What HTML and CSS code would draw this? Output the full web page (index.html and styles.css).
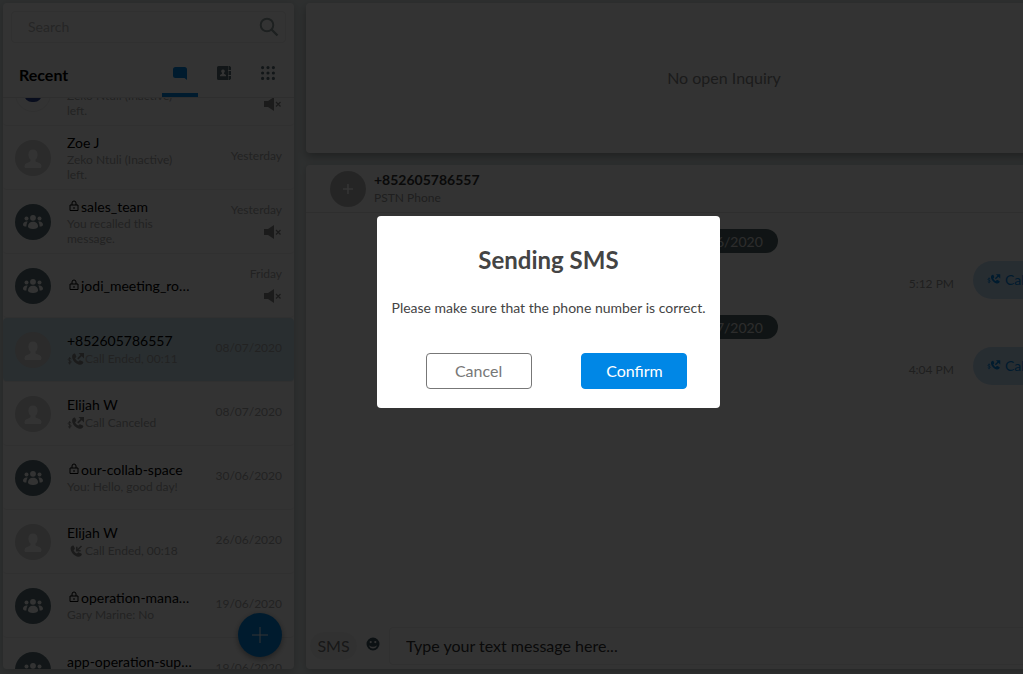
FILE: index.html
```html
<!DOCTYPE html>
<html lang="en">
<head>
    <meta charset="UTF-8">
    <meta name="viewport" content="width=device-width, initial-scale=1.0">
    <title>Messages</title>
    <link rel="stylesheet" href="styles.css">
</head>
<body>

<svg class="sprite" aria-hidden="true">
    <symbol id="i-user" viewBox="0 0 36 36">
        <path d="M18 9.500c-2.700 0-4.600 2-4.600 4.900 0 2 .8 4 2.100 5.200v1.200c0 .7-.4 1-1.200 1.300-2.400.8-4.800 1.700-4.800 4.100 0 1.100.6 1.800 1.500 1.800h14c.9 0 1.500-.7 1.500-1.800 0-2.400-2.400-3.300-4.800-4.100-.8-.3-1.200-.6-1.200-1.300v-1.200c1.300-1.200 2.100-3.200 2.100-5.200 0-2.900-1.900-4.900-4.600-4.900z"/>
    </symbol>
    <symbol id="i-group" viewBox="0 0 36 36">
        <circle cx="11.500" cy="14.500" r="2"/>
        <circle cx="24.500" cy="14.500" r="2"/>
        <circle cx="18" cy="13.800" r="2.900"/>
        <path d="M18 17.800c-3 0-5 2-5 4.500 0 1.800 2 2.700 5 2.700s5-.9 5-2.700c0-2.500-2-4.500-5-4.500z"/>
        <path d="M12.800 17.600c-2.800-.6-4.800 1-4.800 3.200 0 1.200 1.300 1.900 3.400 1.800.1-2.200.4-3.600 1.400-5zM23.200 17.600c2.800-.6 4.800 1 4.800 3.200 0 1.200-1.300 1.900-3.400 1.800-.1-2.200-.4-3.600-1.400-5z"/>
    </symbol>
    <symbol id="i-lock" viewBox="0 0 12 12">
        <path d="M2 5h8v5.500H2zM4 5V3a2 2 0 0 1 4 0v2M6 7v2" fill="none" stroke="currentColor"/>
    </symbol>
    <symbol id="i-mute" viewBox="0 0 18 14">
        <path d="M0 4h4l6-4v14l-6-4H0z"/>
        <path d="M12 5l4.500 4.500M16.500 5L12 9.500" fill="none" stroke="currentColor" stroke-width="1.300"/>
    </symbol>
    <symbol id="i-call-out" viewBox="0 0 18 14">
        <path d="M4.300 7C3.800 6.200 1.200 6 1.200 7.500s3 .9 3 2.400-2.600 1.500-3.200.6M2.700 5v7.500" fill="none" stroke="currentColor" stroke-width=".9"/>
        <path d="M6 2.200C6.800 1.400 7.800 1.200 8.300 2l1 2.200c.2.500 0 .9-.4 1.300l-.8.700c.6 1.500 1.800 2.700 3.300 3.300l.8-.8c.4-.4.8-.5 1.300-.3l2.400 1.100c.7.400.5 1.500-.3 2.300-1 1-2.500 1.200-4.200.6-2.800-.9-5-3.100-6-5.900-.5-1.700-.4-3.300.6-4.300z"/>
        <path d="M10.800 6.800L15 2.600" fill="none" stroke="currentColor" stroke-width="1.800"/>
        <path d="M11.500 1H17v5.500z"/>
    </symbol>
    <symbol id="i-call-in" viewBox="0 0 18 14">
        <path d="M4.500 2.200C5.300 1.400 6.300 1.200 6.800 2l1 2.200c.2.500 0 .9-.4 1.300l-.8.700c.6 1.500 1.800 2.700 3.300 3.300l.8-.8c.4-.4.8-.5 1.300-.3l2.400 1.100c.7.400.5 1.500-.3 2.300-1 1-2.500 1.200-4.200.6-2.800-.9-5-3.100-6-5.900-.5-1.700-.4-3.300.6-4.300z"/>
        <path d="M14.500 2L10 6.500M9.800 2.800v3.900h3.900" fill="none" stroke="currentColor" stroke-width="1.500"/>
    </symbol>
    <symbol id="i-search" viewBox="0 0 20 20">
        <circle cx="8" cy="8" r="6.300" fill="none" stroke="currentColor" stroke-width="2"/>
        <path d="M12.500 12.500l6 6" stroke="currentColor" stroke-width="2.400"/>
    </symbol>
    <symbol id="i-chat" viewBox="0 0 14 14">
        <path d="M2.500 1h9A2.500 2.500 0 0 1 14 3.500V14l-2.500-2h-9A2.500 2.500 0 0 1 0 9.500v-6A2.500 2.500 0 0 1 2.500 1z"/>
    </symbol>
    <symbol id="i-contacts" viewBox="0 0 14 14">
        <path fill-rule="evenodd" d="M1.500 0H11v14H1.500A1.500 1.500 0 0 1 0 12.500v-11A1.500 1.500 0 0 1 1.500 0zM6 3.500a1.800 1.800 0 0 0-1 3.300v.9L3 9v1.200h6V9L7 7.700v-.9a1.800 1.800 0 0 0-1-3.300z"/>
        <path d="M11.500 0h1.300L14 1.200V4h-2.500zM11.500 5H14v4h-2.500zM11.500 10H14v2.800L12.800 14h-1.300z"/>
    </symbol>
    <symbol id="i-grid" viewBox="0 0 14 14">
        <path d="M1.600 1.600h0M7 1.600h0M12.400 1.600h0M1.600 7h0M7 7h0M12.400 7h0M1.600 12.400h0M7 12.400h0M12.400 12.400h0" stroke="currentColor" stroke-width="3.200" stroke-linecap="round"/>
    </symbol>
    <symbol id="i-plus" viewBox="0 0 16 16">
        <path d="M8 0v16M0 8h16" fill="none" stroke="currentColor"/>
    </symbol>
    <symbol id="i-plus-bold" viewBox="0 0 10 10">
        <path d="M5 0v10M0 5h10" fill="none" stroke="currentColor" stroke-width="1.600"/>
    </symbol>
    <symbol id="i-smile" viewBox="0 0 14 14">
        <path fill-rule="evenodd" d="M7 .5a6.500 6.500 0 1 0 0 13 6.500 6.500 0 0 0 0-13zM4.700 4a1.100 1.100 0 1 1 0 2.200 1.100 1.100 0 0 1 0-2.200zm4.600 0a1.100 1.100 0 1 1 0 2.200 1.100 1.100 0 0 1 0-2.200zM3 8.200c1.200 1.100 2.600 1.500 4 1.500s2.800-.4 4-1.500c-.4 2-2 3.300-4 3.300s-3.600-1.300-4-3.300z"/>
    </symbol>
</svg>

<div class="app">
    <aside class="sidebar">
        <div class="search">
            <input type="text" placeholder="Search" aria-label="Search">
            <svg class="search-icon"><use href="#i-search"/></svg>
        </div>
        <div class="tabs">
            <h1>Recent</h1>
            <button class="tab active" aria-label="Chats"><svg><use href="#i-chat"/></svg></button>
            <button class="tab" aria-label="Contacts"><svg><use href="#i-contacts"/></svg></button>
            <button class="tab" aria-label="Apps"><svg><use href="#i-grid"/></svg></button>
        </div>

        <div class="list">
            <ul>
                <li class="row">
                    <div class="avatar logo"><span></span></div>
                    <div class="info">
                        <div class="name">support</div>
                        <div class="sub">Zeko Ntuli (Inactive) left.</div>
                    </div>
                    <div class="meta"><time>Yesterday</time><svg class="mute"><use href="#i-mute"/></svg></div>
                </li>
                <li class="row">
                    <div class="avatar"><svg><use href="#i-user"/></svg></div>
                    <div class="info">
                        <div class="name">Zoe J</div>
                        <div class="sub">Zeko Ntuli (Inactive) left.</div>
                    </div>
                    <div class="meta"><time>Yesterday</time></div>
                </li>
                <li class="row">
                    <div class="avatar group"><svg><use href="#i-group"/></svg></div>
                    <div class="info">
                        <div class="name"><svg class="lock"><use href="#i-lock"/></svg>sales_team</div>
                        <div class="sub">You recalled this message.</div>
                    </div>
                    <div class="meta"><time>Yesterday</time><svg class="mute"><use href="#i-mute"/></svg></div>
                </li>
                <li class="row">
                    <div class="avatar group"><svg><use href="#i-group"/></svg></div>
                    <div class="info">
                        <div class="name"><svg class="lock"><use href="#i-lock"/></svg>jodi_meeting_room</div>
                    </div>
                    <div class="meta"><time>Friday</time><svg class="mute"><use href="#i-mute"/></svg></div>
                </li>
                <li class="row selected">
                    <div class="avatar"><svg><use href="#i-user"/></svg></div>
                    <div class="info">
                        <div class="name">+852605786557</div>
                        <div class="sub call"><svg><use href="#i-call-out"/></svg>Call Ended, 00:11</div>
                    </div>
                    <div class="meta"><time>08/07/2020</time></div>
                </li>
                <li class="row">
                    <div class="avatar"><svg><use href="#i-user"/></svg></div>
                    <div class="info">
                        <div class="name">Elijah W</div>
                        <div class="sub call"><svg><use href="#i-call-out"/></svg>Call Canceled</div>
                    </div>
                    <div class="meta"><time>08/07/2020</time></div>
                </li>
                <li class="row">
                    <div class="avatar group"><svg><use href="#i-group"/></svg></div>
                    <div class="info">
                        <div class="name"><svg class="lock"><use href="#i-lock"/></svg>our-collab-space</div>
                        <div class="sub">You: Hello, good day!</div>
                    </div>
                    <div class="meta"><time>30/06/2020</time></div>
                </li>
                <li class="row">
                    <div class="avatar"><svg><use href="#i-user"/></svg></div>
                    <div class="info">
                        <div class="name">Elijah W</div>
                        <div class="sub call"><svg><use href="#i-call-in"/></svg>Call Ended, 00:18</div>
                    </div>
                    <div class="meta"><time>26/06/2020</time></div>
                </li>
                <li class="row">
                    <div class="avatar group"><svg><use href="#i-group"/></svg></div>
                    <div class="info">
                        <div class="name"><svg class="lock"><use href="#i-lock"/></svg>operation-management</div>
                        <div class="sub">Gary Marine: No</div>
                    </div>
                    <div class="meta"><time>19/06/2020</time></div>
                </li>
                <li class="row">
                    <div class="avatar group"><svg><use href="#i-group"/></svg></div>
                    <div class="info">
                        <div class="name">app-operation-support</div>
                        <div class="sub">You: Thanks</div>
                    </div>
                    <div class="meta"><time>19/06/2020</time></div>
                </li>
            </ul>
        </div>
        <button class="fab" aria-label="New chat"><svg><use href="#i-plus"/></svg></button>
    </aside>

    <main class="main">
        <section class="inquiry">No open Inquiry</section>

        <section class="chat">
            <header class="chat-header">
                <div class="add"><svg><use href="#i-plus-bold"/></svg></div>
                <div>
                    <h2>+852605786557</h2>
                    <p>PSTN Phone</p>
                </div>
            </header>

            <div class="messages">
                <div class="day">26/06/2020</div>
                <div class="message">
                    <time>5:12 PM</time>
                    <div class="bubble"><svg><use href="#i-call-out"/></svg>Call Canceled</div>
                </div>
                <div class="day">08/07/2020</div>
                <div class="message">
                    <time>4:04 PM</time>
                    <div class="bubble"><svg><use href="#i-call-out"/></svg>Call Ended, 00:11</div>
                </div>
            </div>

            <form class="composer">
                <button type="button" class="sms">SMS</button>
                <button type="button" class="emoji" aria-label="Emoji"><svg><use href="#i-smile"/></svg></button>
                <input type="text" placeholder="Type your text message here..." aria-label="Message">
            </form>
        </section>
    </main>
</div>

<div class="overlay">
    <div class="modal" role="dialog" aria-modal="true" aria-labelledby="modal-title">
        <h2 id="modal-title">Sending SMS</h2>
        <p>Please make sure that the phone number is correct.</p>
        <div class="actions">
            <button class="btn">Cancel</button>
            <button class="btn primary">Confirm</button>
        </div>
    </div>
</div>

</body>
</html>
```
FILE: styles.css
```css
* {
    box-sizing: border-box;
}
body {
    margin: 0;
    font-family: Lato, sans-serif;
    font-size: 14px;
    color: #000;
    background: #e4ecec;
    overflow: hidden;
}
h1, h2, p, ul {
    margin: 0;
    padding: 0;
}
button, input {
    font-family: inherit;
    border: none;
    background: none;
    padding: 0;
}
button {
    cursor: pointer;
}
svg {
    fill: currentColor;
    flex-shrink: 0;
}
.sprite {
    display: none;
}
.app {
    display: flex;
    gap: 12px;
    height: 100vh;
    padding: 3px 6px 5px 3px;
    overflow: hidden;
}

/* sidebar */
.sidebar {
    position: relative;
    display: flex;
    flex-direction: column;
    flex: 0 0 291px;
    background: #fff;
    border-radius: 4px;
    box-shadow: 0 2px 8px rgba(0, 0, 0, 0.2);
}
.search {
    display: flex;
    align-items: center;
    height: 32px;
    margin: 8px 8px 0;
    padding: 0 6px 0 16px;
    border: 1px solid #eee;
    border-radius: 4px;
}
.search input {
    flex: 1;
    min-width: 0;
    padding-bottom: 2px;
    font-size: 14px;
}
.search input::placeholder {
    color: #bbb;
}
.search-icon {
    width: 20px;
    height: 20px;
    color: #90a0a0;
}
.tabs {
    display: flex;
    height: 55px;
    padding: 0 8px 0 16px;
    border-bottom: 1px solid #e6e6e6;
}
.tabs h1 {
    flex: 1;
    padding-top: 20px;
    font-size: 16px;
    line-height: 24px;
}
.tab {
    width: 36px;
    margin-left: 8px;
    border-bottom: 4px solid transparent;
    color: #5b7077;
}
.tab svg {
    display: block;
    width: 14px;
    height: 14px;
    margin: 10px auto 0;
}
.tab.active {
    background: linear-gradient(#0087e6, #0087e6) bottom / 100% 4px no-repeat border-box;
    border-radius: 2px 2px 0 0;
    color: #0087e6;
}
.list {
    flex: 1;
    min-height: 0;
    overflow: hidden;
}
/* list is scrolled down a little */
.list ul {
    margin-top: -36px;
    list-style: none;
}
.row {
    display: flex;
    align-items: center;
    height: 64px;
    padding: 0 12px;
    border-bottom: 1px solid #eee;
    border-radius: 4px;
}
.row.selected {
    background: #cde6f0;
}
.avatar {
    display: flex;
    align-items: center;
    justify-content: center;
    flex: 0 0 36px;
    height: 36px;
    border-radius: 50%;
    background: #d4d4d4;
    color: #fff;
}
.avatar svg {
    width: 36px;
    height: 36px;
}
.avatar.group {
    background: #5b7077;
}
.avatar.logo {
    background: #fff;
    border: 1px solid #eee;
}
.avatar.logo span {
    width: 18px;
    height: 16px;
    border-radius: 8px;
    background: #2a4090;
}
.info {
    width: 126px;
    margin-left: 16px;
}
.name {
    font-size: 14px;
    line-height: 18px;
    white-space: nowrap;
    overflow: hidden;
    text-overflow: ellipsis;
}
.lock {
    width: 12px;
    height: 12px;
    margin: 0 1px;
}
.sub {
    font-size: 12px;
    line-height: 15px;
    color: #aaa;
}
.sub.call {
    display: flex;
    align-items: center;
    line-height: 18px;
}
.sub.call svg {
    width: 18px;
    height: 14px;
    color: #888;
}
.meta {
    display: flex;
    flex-direction: column;
    align-items: flex-end;
    gap: 8px;
    margin-left: auto;
    padding-bottom: 2px;
    font-size: 12px;
    line-height: 15px;
    color: #aaa;
}
.meta time:only-child {
    padding-bottom: 2px;
}
.mute {
    width: 18px;
    height: 14px;
    color: #888;
}
.fab {
    position: absolute;
    right: 12px;
    bottom: 12px;
    display: flex;
    align-items: center;
    justify-content: center;
    width: 44px;
    height: 44px;
    border-radius: 50%;
    background: #0087e6;
    color: #fff;
    box-shadow: 0 2px 6px rgba(0, 0, 0, 0.4);
}
.fab svg {
    width: 16px;
    height: 16px;
}

/* main column */
.main {
    display: flex;
    flex-direction: column;
    flex: 1 0 836px;
    gap: 12px;
}
.inquiry {
    display: flex;
    align-items: center;
    justify-content: center;
    flex: 0 0 150px;
    padding-bottom: 2px;
    background: #fff;
    border-radius: 4px;
    box-shadow: 0 4px 10px rgba(0, 0, 0, 0.3);
    font-size: 16px;
    color: #888;
}
.chat {
    display: flex;
    flex-direction: column;
    flex: 1;
    background: #fff;
    border-radius: 4px;
    box-shadow: 0 2px 6px rgba(0, 0, 0, 0.2);
}
.chat-header {
    display: flex;
    align-items: center;
    gap: 8px;
    height: 48px;
    padding: 0 24px;
    border-bottom: 1px solid #e6e6e6;
}
.chat-header h2 {
    padding-top: 1px;
    font-size: 14px;
    line-height: 18px;
    color: #333;
}
.chat-header p {
    font-size: 12px;
    line-height: 18px;
    color: #999;
}
.add {
    display: flex;
    align-items: center;
    justify-content: center;
    width: 36px;
    height: 36px;
    border-radius: 50%;
    background: #bbb;
    color: #fff;
}
.add svg {
    width: 10px;
    height: 10px;
}
.messages {
    flex: 1;
    padding: 16px 15px;
}
.day {
    width: 108px;
    height: 24px;
    margin: 0 auto 8px;
    border-radius: 12px;
    background: #536769;
    color: #ddd;
    line-height: 26px;
    text-align: center;
}
.message {
    display: flex;
    align-items: center;
    justify-content: flex-end;
    gap: 19px;
    margin-bottom: 16px;
}
.message time {
    padding-top: 6px;
    font-size: 12px;
    color: #999;
}
.bubble {
    display: flex;
    align-items: center;
    gap: 4px;
    min-width: 154px;
    height: 38px;
    padding: 0 14px 2px;
    border-radius: 19px;
    background: #c4dff5;
    color: #0087e6;
}
.bubble svg {
    width: 14px;
    height: 12px;
}
.composer {
    display: flex;
    align-items: center;
    padding: 0 4px 4px;
}
.sms {
    width: 47px;
    height: 28px;
    padding-bottom: 2px;
    border-radius: 14px;
    background: #f6f6f6;
    font-size: 16px;
    color: #777;
}
.emoji {
    width: 32px;
    height: 20px;
    padding-bottom: 2px;
    color: #3f5560;
}
.emoji svg {
    width: 14px;
    height: 14px;
}
.composer input {
    flex: 1;
    height: 38px;
    padding: 0 16px 2px;
    border: 1px solid #eee;
    border-radius: 4px;
    font-size: 16px;
}
.composer input::placeholder {
    color: #333;
}

/* dialog */
.overlay {
    position: fixed;
    inset: 0;
    display: flex;
    align-items: center;
    justify-content: center;
    padding: 0 0 50px 74px;
    background: rgba(0, 0, 0, 0.8);
}
.modal {
    padding: 28px 15px 19px;
    border-radius: 4px;
    background: #fff;
    color: #444;
    text-align: center;
}
.modal h2 {
    font-size: 24px;
    line-height: 32px;
}
.modal p {
    margin: 22px 0 35px;
    font-size: 14px;
    line-height: 20px;
}
.actions {
    display: flex;
    justify-content: space-between;
    padding: 0 18px 0 34px;
}
.btn {
    width: 106px;
    height: 36px;
    padding-bottom: 2px;
    border: 1px solid #777;
    border-radius: 4px;
    font-size: 16px;
    color: #777;
}
.btn.primary {
    border-color: #0087e6;
    background: #0087e6;
    color: #fff;
}
```
